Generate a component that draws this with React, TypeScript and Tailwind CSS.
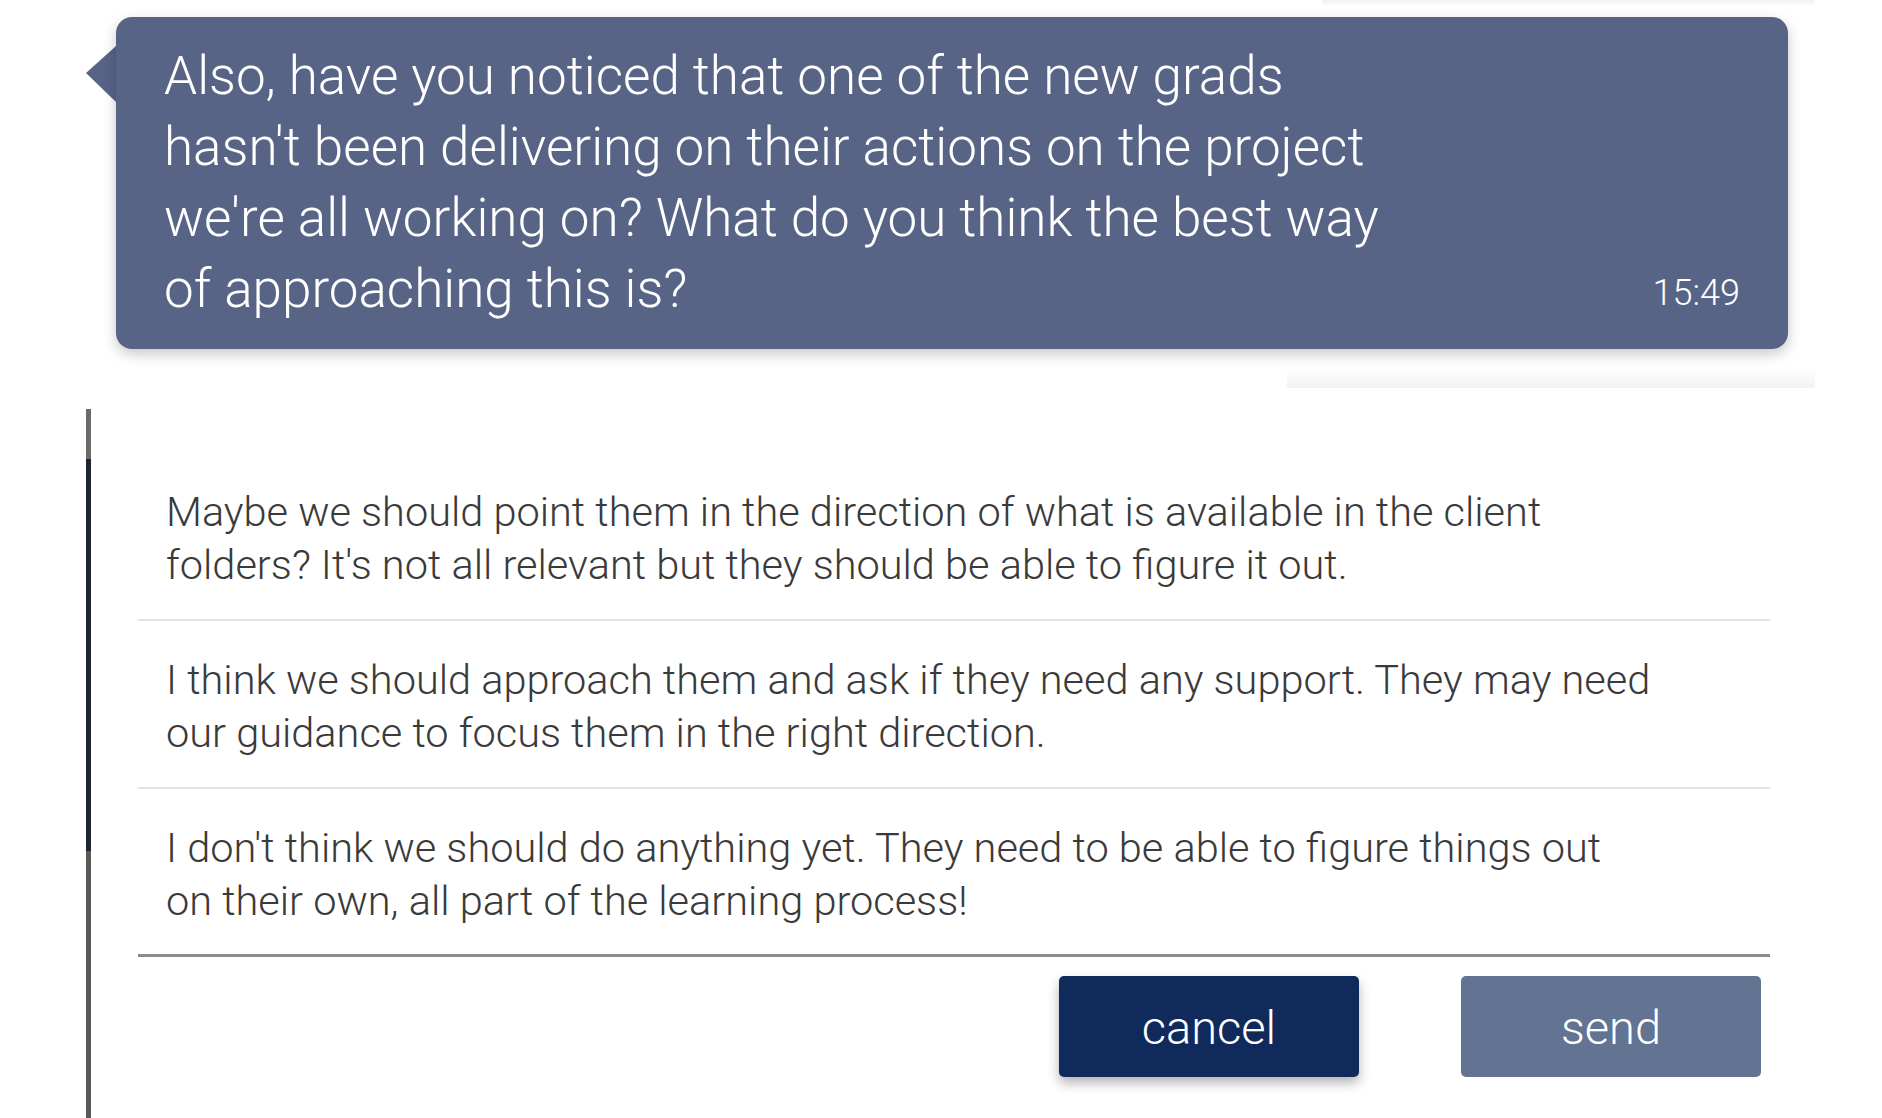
import React from "react";

const bubbleLines = [
  "Also, have you noticed that one of the new grads",
  "hasn't been delivering on their actions on the project",
  "we're all working on? What do you think the best way",
  "of approaching this is?",
];

const options = [
  [
    "Maybe we should point them in the direction of what is available in the client",
    "folders? It's not all relevant but they should be able to figure it out.",
  ],
  [
    "I think we should approach them and ask if they need any support. They may need",
    "our guidance to focus them in the right direction.",
  ],
  [
    "I don't think we should do anything yet. They need to be able to figure things out",
    "on their own, all part of the learning process!",
  ],
];

export default function App() {
  return (
    <div
      className="relative min-h-screen w-full overflow-hidden bg-white"
      style={{ fontFamily: "Roboto, 'Liberation Sans', sans-serif" }}
    >
      {/* faint shadow of the card above */}
      <div className="ml-auto mr-[67px] h-[6px] w-[493px] bg-gradient-to-b from-[#f1f1f1] to-white" />

      {/* incoming message */}
      <div className="flex pl-[86px] pr-[94px] pt-[11px]">
        <svg width="30" height="56" viewBox="0 0 30 56" className="mt-[29px] shrink-0">
          <path d="M30 0 L0 27 L30 56 Z" fill="#586486" />
        </svg>
        <div className="flex flex-1 items-end justify-between rounded-[16px] bg-[#586486] pb-[24px] pl-[48px] pr-[48px] pt-[24px] shadow-[0_5px_14px_rgba(0,0,0,0.22)]">
          <div className="text-[53px] font-light leading-[71px] text-white">
            {bubbleLines.map((l) => (
              <div key={l} className="whitespace-nowrap">{l}</div>
            ))}
          </div>
          <div className="pb-[14px] text-[36px] font-light leading-none text-white">15:49</div>
        </div>
      </div>

      <div className="ml-auto mr-[67px] mt-[19px] h-[20px] w-[528px] bg-gradient-to-b from-white to-[#f2f2f2]" />

      {/* answer options panel */}
      <div className="ml-[86px] mr-[67px] mt-[21px] flex min-h-[710px]">
        <div className="flex w-[5px] shrink-0 flex-col">
          <div className="h-[50px] bg-[#6a6a6a]" />
          <div className="h-[392px] bg-[#1f2434]" />
          <div className="flex-1 bg-[#595959]" />
        </div>
        <div className="flex-1 pl-[47px] pr-[45px] pt-[44px]">
          {options.map((o, i) => (
            <div
              key={i}
              className={
                i === options.length - 1
                  ? "flex h-[168px] flex-col justify-center border-b-[3px] border-[#8c8c8c] px-[28px] pt-[4px] text-[41.5px] font-light leading-[53px] text-[#3a3a3a]"
                  : "flex h-[168px] flex-col justify-center border-b-2 border-[#e2e2e2] px-[28px] pt-[4px] text-[41.5px] font-light leading-[53px] text-[#3a3a3a]"
              }
            >
              {o.map((l) => (
                <div key={l} className="whitespace-nowrap">{l}</div>
              ))}
            </div>
          ))}
          <div className="mt-[19px] flex justify-end gap-[102px] pr-[9px]">
            <button className="h-[101px] w-[300px] rounded-[5px] bg-[#102a5b] pt-[4px] text-[47px] font-light text-white shadow-[0_6px_12px_rgba(0,0,0,0.3)]">
              cancel
            </button>
            <button className="h-[101px] w-[300px] rounded-[5px] bg-[#627492] pt-[4px] text-[47px] font-light text-white">
              send
            </button>
          </div>
        </div>
      </div>
    </div>
  );
}
